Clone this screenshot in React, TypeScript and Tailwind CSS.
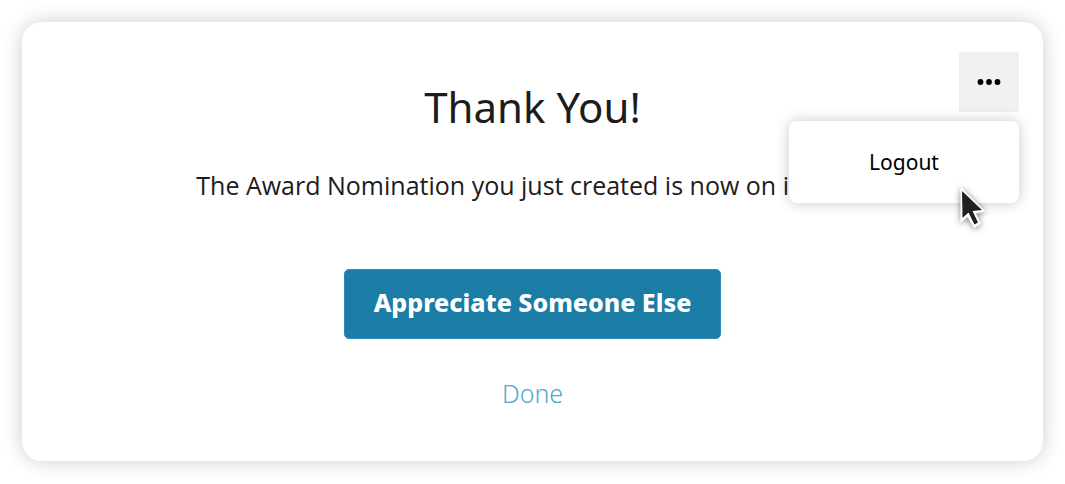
import React from "react";

function Cursor() {
  return (
    <svg
      aria-hidden="true"
      viewBox="0 0 28 42"
      className="pointer-events-none absolute top-[65px] right-8 h-[42px] w-[28px] overflow-visible drop-shadow-[0_1px_3px_rgba(0,0,0,0.5)]"
    >
      <path
        d="M1.5 0.5 L1.5 37 L8.5 31 L15 42 L22 38 L17 27.5 L26.5 25.5 Z"
        fill="#fff"
      />
      <path
        d="M3 5 L3.5 32 L9.5 26.5 L15.5 38.5 L19 36.5 L13.5 25 L23 24 Z"
        fill="#231f20"
      />
    </svg>
  );
}

function AccountMenu() {
  return (
    <div className="absolute top-[30px] right-6 flex flex-col items-end gap-[9px]">
      <button
        type="button"
        aria-label="More options"
        aria-expanded="true"
        className="flex size-[60px] items-center justify-center rounded-xs bg-[#f0f0f0]"
      >
        <svg viewBox="0 0 24 6" className="h-[6px] w-[24px]" fill="#000">
          <circle cx="3.5" cy="3" r="2.9" />
          <circle cx="12" cy="3" r="2.9" />
          <circle cx="20.5" cy="3" r="2.9" />
        </svg>
      </button>
      <div className="relative w-[230px] rounded-lg bg-white shadow-[0_0_14px_rgba(0,0,0,0.22)]">
        <button
          type="button"
          className="w-full py-[26px] text-center text-[21px] leading-[30px] text-black"
        >
          Logout
        </button>
        <Cursor />
      </div>
    </div>
  );
}

export default function App() {
  return (
    <div className="bg-white p-[22px] font-['Noto_Sans',sans-serif]">
      <main className="relative flex flex-col items-center rounded-[20px] bg-white pt-[55px] pb-[50px] text-center text-[#1c1c1c] shadow-[0_0_20px_rgba(0,0,0,0.2)]">
        <h1 className="text-[42px] leading-[60px]">Thank You!</h1>
        <p className="mt-[30px] font-['Open_Sans',sans-serif] text-[25px] leading-[36px] whitespace-nowrap">
          The Award Nomination you just created is now on its way!
        </p>
        <button
          type="button"
          className="mt-[66px] rounded-[5px] border border-[#2b8bb5] bg-[#1b7ca6] px-[29px] pt-[14px] pb-[18px] text-[25px] leading-[36px] font-extrabold text-white"
        >
          Appreciate Someone Else
        </button>
        <a
          href="#done"
          className="mt-[36px] text-[25px] leading-[36px] font-light text-[#4fa8cf]"
        >
          Done
        </a>
        <AccountMenu />
      </main>
    </div>
  );
}
